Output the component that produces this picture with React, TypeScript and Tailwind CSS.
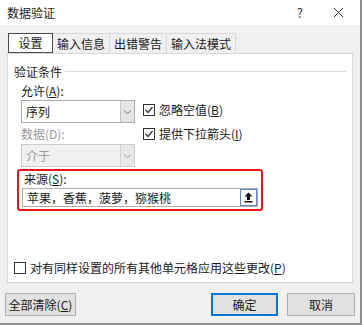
import React from "react";

const font = { fontFamily: '"Microsoft YaHei", "Noto Sans CJK SC", "Noto Sans", sans-serif' };

function Chevron({ disabled = false }: { disabled?: boolean }) {
  return (
    <svg width="9" height="6" viewBox="0 0 9 6" fill="none">
      <path d="M1 1.5 L4.5 4.5 L8 1.5" stroke={disabled ? "#a0a0a0" : "#707070"} strokeWidth="1" />
    </svg>
  );
}

function Select({ value, disabled = false }: { value: string; disabled?: boolean }) {
  return (
    <div
      className={`flex h-[23px] w-[114px] border ${disabled ? "border-[#cccccc] bg-[#f0f0f0]" : "border-[#acacac] bg-white"}`}
    >
      <div className={`flex flex-1 items-center pl-[4px] text-[12px] ${disabled ? "text-[#9a9a9a]" : "text-[#1a1a1a]"}`}>
        {value}
      </div>
      <div
        className={`flex w-[14px] items-center justify-center border-l ${disabled ? "border-[#d4d4d4] bg-[#e8e8e8]" : "border-[#c4c4c4] bg-[#e5e5e5]"}`}
      >
        <Chevron disabled={disabled} />
      </div>
    </div>
  );
}

function Check({ checked, children }: { checked: boolean; children: React.ReactNode }) {
  return (
    <div className="flex h-[16px] items-center gap-[4px] text-[12px] text-[#1a1a1a]">
      <div className="flex h-[12px] w-[12px] items-center justify-center border border-[#333333] bg-white">
        {checked && (
          <svg width="10" height="10" viewBox="0 0 10 10" fill="none">
            <path d="M1.5 5 L4 7.5 L8.5 2" stroke="#333333" strokeWidth="1.2" />
          </svg>
        )}
      </div>
      <span>{children}</span>
    </div>
  );
}

const tabs = ["设置", "输入信息", "出错警告", "输入法模式"];
const tabWidths = ["w-[45px]", "w-[57px]", "w-[57px]", "w-[69px]"];

export default function App() {
  return (
    <div style={font} className="flex h-[325px] w-[362px] flex-col overflow-hidden border-r-2 border-b-2 border-[#8c8c8c] bg-[#f0f0f0]">
      {/* title bar */}
      <div className="flex h-[25px] shrink-0 items-center bg-white pl-[7px] text-[12px] text-[#1a1a1a]">
        <span>数据验证</span>
        <span className="ml-auto mr-[30px] text-[13px] text-[#333333]">?</span>
        <svg className="mr-[16px]" width="11" height="11" viewBox="0 0 11 11">
          <path d="M1 1 L10 10 M10 1 L1 10" stroke="#333333" strokeWidth="1" />
        </svg>
      </div>

      {/* tabs */}
      <div className="ml-[8px] mt-[8px] flex h-[20px]">
        {tabs.map((t, i) => (
          <div
            key={t}
            className={`flex items-center justify-center text-[12px] text-[#1a1a1a] ${tabWidths[i]} ${
              i === 0
                ? "border border-[#4a4a4a] bg-white"
                : "border-t border-r border-[#d9d9d9] bg-[#f0f0f0]"
            }`}
          >
            {t}
          </div>
        ))}
      </div>

      {/* panel */}
      <div className="mx-[7px] flex h-[230px] flex-col border border-[#d9d9d9] bg-white">
        <div className="mt-[10px] flex h-[15px] items-center pl-[6px] pr-[6px] text-[12px] text-[#1a1a1a]">
          <span>验证条件</span>
          <div className="ml-[3px] h-px flex-1 bg-[#dcdcdc]" />
        </div>

        <div className="ml-[13px] mt-[4px] flex">
          <div className="flex w-[114px] flex-col">
            <div className="flex h-[16px] items-center text-[12px] text-[#1a1a1a]">
              允许(<span className="underline">A</span>):
            </div>
            <div className="mt-[1px]">
              <Select value="序列" />
            </div>
            <div className="mt-[3px] flex h-[16px] items-center text-[12px] text-[#9a9a9a]">数据(D):</div>
            <div className="mt-[2px]">
              <Select value="介于" disabled />
            </div>
          </div>
          <div className="ml-[8px] flex flex-col gap-[8px] pt-[19px]">
            <Check checked>
              忽略空值(<span className="underline">B</span>)
            </Check>
            <Check checked>
              提供下拉箭头(<span className="underline">I</span>)
            </Check>
          </div>
        </div>

        <div className="ml-[9px] mt-[2px] flex h-[42px] w-[246px] flex-col rounded-[3px] border-2 border-[#e8141c] px-[3px]">
          <div className="flex h-[16px] items-center pl-[2px] text-[12px] text-[#1a1a1a]">
            来源(<span className="underline">S</span>):
          </div>
          <div className="mt-[1px] flex h-[19px] items-center border border-[#acacac] bg-white pl-[4px] text-[12px] text-[#1a1a1a]">
            <span className="flex-1">苹果，香蕉，菠萝，猕猴桃</span>
            <div className="flex h-[17px] w-[17px] items-center justify-center border border-[#5a8ac6] bg-white">
              <svg width="9" height="11" viewBox="0 0 9 11">
                <path d="M4.5 0.5 L8.5 4.5 L6 4.5 L6 8 L3 8 L3 4.5 L0.5 4.5 Z" fill="#111111" />
                <rect x="0.5" y="9" width="8" height="1.5" fill="#111111" />
              </svg>
            </div>
          </div>
        </div>

        <div className="ml-[6px] mt-[49px]">
          <Check checked={false}>
            对有同样设置的所有其他单元格应用这些更改(<span className="underline">P</span>)
          </Check>
        </div>
      </div>

      {/* buttons */}
      <div className="mt-[10px] flex h-[23px] pl-[5px]">
        <div className="flex w-[71px] items-center justify-center border border-[#adadad] bg-[#e1e1e1] text-[12px] text-[#1a1a1a]">
          全部清除(<span className="underline">C</span>)
        </div>
        <div className="ml-auto flex w-[67px] items-center justify-center border-2 border-[#0078d7] bg-[#e1e1e1] text-[12px] text-[#1a1a1a]">
          确定
        </div>
        <div className="ml-[9px] mr-[5px] flex w-[68px] items-center justify-center border border-[#adadad] bg-[#e1e1e1] text-[12px] text-[#1a1a1a]">
          取消
        </div>
      </div>
    </div>
  );
}
